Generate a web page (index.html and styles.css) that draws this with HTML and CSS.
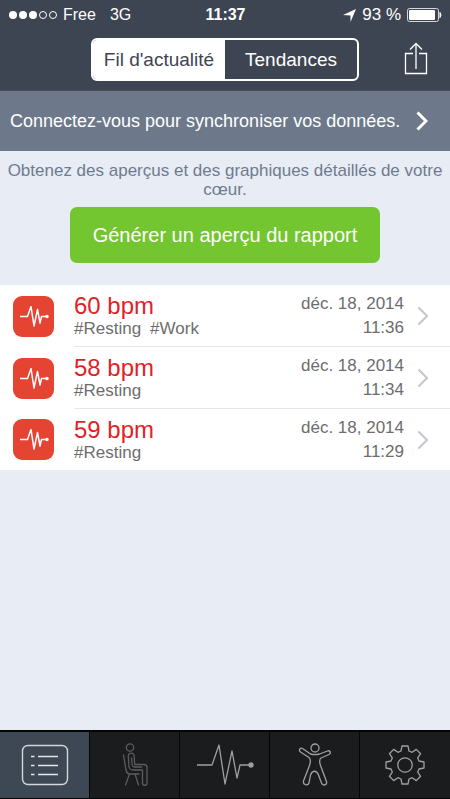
FILE: index.html
```html
<!DOCTYPE html>
<html lang="fr">
<head>
<meta charset="utf-8">
<meta name="viewport" content="width=device-width, initial-scale=1">
<title>Fil d'actualité</title>
<link rel="stylesheet" href="styles.css">
</head>
<body>
<svg class="sprite" aria-hidden="true">
  <symbol id="pulse" viewBox="0 0 60 42"><path d="M2 21h15l7-20 6 39 7-33 5 27 3-13h10" fill="none" stroke="currentColor" stroke-linejoin="round"/><circle cx="56" cy="21" r="2" fill="currentColor" stroke="currentColor"/></symbol>
  <symbol id="chevron" viewBox="0 0 12 20"><path d="M1.500 1.500 10 10l-8.500 8.500" fill="none" stroke="currentColor"/></symbol>
</svg>
<header class="top">
  <div class="status">
    <div class="carrier">
      <svg width="48" height="10" viewBox="0 0 48 10" aria-hidden="true"><g fill="#fff"><circle cx="4" cy="5" r="4"/><circle cx="14" cy="5" r="4"/><circle cx="24" cy="5" r="4"/></g><g fill="none" stroke="#fff"><circle cx="34" cy="5" r="3.500"/><circle cx="44" cy="5" r="3.500"/></g></svg>
      <span>Free</span><span class="network">3G</span>
    </div>
    <time class="clock">11:37</time>
    <div class="power">
      <svg width="13" height="13" viewBox="0 0 13 13" aria-hidden="true"><path d="M13 0 7.500 13V6.500L0 6z" fill="#fff"/></svg>
      <span>93 %</span>
      <svg width="35" height="14" viewBox="0 0 35 14" aria-hidden="true"><rect x=".5" y=".5" width="31" height="13" rx="2" fill="none" stroke="#d5d8dc"/><rect x="2" y="2" width="26" height="10" rx="1" fill="#fff"/><path d="M33 4.500q2 2.500 0 5z" fill="#fff" stroke="#fff"/></svg>
    </div>
  </div>
  <nav class="nav">
    <div class="segments">
      <button class="segment selected" type="button">Fil d'actualité</button>
      <button class="segment" type="button">Tendances</button>
    </div>
    <button class="share" type="button" aria-label="Partager"><svg width="24" height="33" viewBox="0 0 24 33"><path d="M9 11.500H1.500v20h21v-20H15M12 27V1.500M6 7.500l6-6 6 6" fill="none" stroke="#fff" stroke-width="1.300"/></svg></button>
  </nav>
</header>
<a class="banner" href="#"><span>Connectez-vous pour synchroniser vos données.</span><svg width="12" height="20"><use href="#chevron"/></svg></a>
<main>
  <section class="intro">
    <p>Obtenez des aperçus et des graphiques détaillés de votre cœur.</p>
    <button class="report" type="button">Générer un aperçu du rapport</button>
  </section>
  <ul class="list">
    <li><a class="row" href="#">
      <span class="badge"><svg width="30" height="21"><use href="#pulse"/></svg></span>
      <span class="entry"><span class="reading"><span class="bpm">60 bpm</span><span class="tags"><span>#Resting</span><span>#Work</span></span></span>
      <span class="when"><span>déc. 18, 2014</span><span>11:36</span></span>
      <svg class="more" width="12" height="20"><use href="#chevron"/></svg></span>
    </a></li>
    <li><a class="row" href="#">
      <span class="badge"><svg width="30" height="21"><use href="#pulse"/></svg></span>
      <span class="entry"><span class="reading"><span class="bpm">58 bpm</span><span class="tags"><span>#Resting</span></span></span>
      <span class="when"><span>déc. 18, 2014</span><span>11:34</span></span>
      <svg class="more" width="12" height="20"><use href="#chevron"/></svg></span>
    </a></li>
    <li><a class="row" href="#">
      <span class="badge"><svg width="30" height="21"><use href="#pulse"/></svg></span>
      <span class="entry"><span class="reading"><span class="bpm">59 bpm</span><span class="tags"><span>#Resting</span></span></span>
      <span class="when"><span>déc. 18, 2014</span><span>11:29</span></span>
      <svg class="more" width="12" height="20"><use href="#chevron"/></svg></span>
    </a></li>
  </ul>
</main>
<nav class="tabs">
  <button class="tab active" type="button" aria-label="Journal"><svg width="48" height="42" viewBox="0 0 48 42"><rect x="1.500" y="1.500" width="45" height="39" rx="5.500" fill="none" stroke="#d4d7da" stroke-width="1.400"/><path d="M10 12.500h3.500M17 12.500h20M10 21.500h3.500M17 21.500h20M10 30.500h3.500M17 30.500h20" stroke="#e4e6e8" stroke-width="1.400"/></svg></button>
  <button class="tab dim" type="button" aria-label="Repos"><svg width="26" height="44" viewBox="0 0 26 44"><g fill="none" stroke="currentColor" stroke-width="1.300" stroke-linecap="round" stroke-linejoin="round"><circle cx="8" cy="4.500" r="3.700"/><path d="M1.500 12 4 27q.8 4 4 4h9M7.500 31 3.500 42M13 31l3.500 11"/><path d="M6.300 13.500c0-4.500 5.700-4.500 5.900 0l.5 8H22q3 0 3 3V40c0 3-4.500 3-4.500 0V27H11q-3.500 0-4-3.500zM9.500 15l.7 7q.3 2 2.500 2h7"/></g></svg></button>
  <button class="tab" type="button" aria-label="Mesurer"><svg width="60" height="42" stroke-width="1.300"><use href="#pulse"/></svg></button>
  <button class="tab" type="button" aria-label="Activité"><svg width="34" height="44" viewBox="0 0 34 44"><g fill="none" stroke="currentColor" stroke-width="1.300" stroke-linejoin="round"><circle cx="17" cy="5" r="4"/><path d="M4.500 5.500C2.500 4 0 7.500 2.500 9l8.500 5.500c2 2 1.500 5 .5 8L5.500 38c-1 4 4.500 5 5.500 2l1.500-8c2-5 6-5 8 0l3 8c1.500 3.500 6 2 5-1.500l-6-16c-1-3-1.500-6 .5-7.500L31 11.500c2.500-1.500 1-4.500-1.500-3.500l-8 3c-3 .8-6 .8-9 0z"/></g></svg></button>
  <button class="tab" type="button" aria-label="Réglages"><svg width="40" height="40" viewBox="-20 -20 40 40"><g fill="none" stroke="currentColor" stroke-width="1.300" stroke-linejoin="round"><circle r="7.200"/><path d="M-4-14-3-19H3L4-14 7.100-12.700 11.300-15.600 15.600-11.300 12.700-7.100 14-4 19-3V3L14 4 12.700 7.100 15.600 11.300 11.300 15.600 7.100 12.700 4 14 3 19H-3L-4 14-7.100 12.700-11.300 15.600-15.600 11.300-12.700 7.100-14 4-19 3V-3L-14-4-12.700-7.100-15.600-11.300-11.300-15.600-7.100-12.700z"/></g></svg></button>
</nav>
</body>
</html>
```
FILE: styles.css
```css
* { box-sizing: border-box; }
body {
  margin: 0;
  min-height: 100vh;
  display: flex;
  flex-direction: column;
  background: #e8ecf4;
  font: 17px/24px "Liberation Sans", Arial, sans-serif;
  color: #6d6d6d;
}
button { font: inherit; color: inherit; border: 0; padding: 0; background: none; }
a { color: inherit; text-decoration: none; }
svg { display: block; flex: none; }
.sprite { position: absolute; width: 0; height: 0; }

.top { background: #3e4552; color: #fff; border-bottom: 1px solid #4a4a5c; }
.status {
  display: grid;
  grid-template-columns: 1fr auto 1fr;
  align-items: center;
  height: 30px;
  padding: 0 8px 0 9px;
  font-size: 16px;
}
.carrier, .power { display: flex; align-items: center; gap: 6px; }
.power { justify-content: flex-end; font-size: 17px; }
.network { margin-left: 8px; }
.clock { font-weight: bold; }
.nav {
  display: grid;
  grid-template-columns: 1fr 268px 1fr;
  align-items: start;
  height: 60px;
  padding-top: 8px;
}
.segments {
  grid-column: 2;
  display: flex;
  height: 43px;
  border: 2px solid #fff;
  border-radius: 6px;
  overflow: hidden;
  font-size: 19px;
}
.segment { flex: 1; }
.segment.selected { background: #fff; color: #3e4552; }
.share {
  display: grid;
  place-items: center;
  height: 40px;
  justify-self: end;
  margin-right: 22px;
}

.banner {
  display: flex;
  align-items: center;
  gap: 16px;
  height: 60px;
  padding: 0 10px;
  background: #6d798b;
  color: #fff;
  font-size: 18px;
  white-space: nowrap;
}
.banner svg { stroke-width: 3; }

main { flex: 1; }
.intro { padding: 10px 4px 22px; text-align: center; }
.intro p { margin: 0 0 8px; line-height: 19px; color: #6f7b90; }
.report {
  width: 310px;
  height: 56px;
  border-radius: 7px;
  background: #73c62f;
  color: #fff;
  font-size: 20px;
}

.list { margin: 0; padding: 0; list-style: none; background: #fff; }
.row { display: flex; align-items: center; padding-left: 13px; }
.badge {
  display: grid;
  place-items: center;
  width: 41px;
  height: 41px;
  margin-right: 20px;
  border-radius: 9px;
  background: #e64432;
  color: #fff;
}
.badge svg { stroke-width: 3; }
.entry {
  flex: 1;
  display: flex;
  align-items: center;
  height: 62px;
  padding-right: 21px;
  border-bottom: 1px solid #e6e7e9;
}
li:last-child .entry { height: 61px; border-bottom: 0; }
.reading { flex: 1; display: flex; flex-direction: column; }
.bpm { font-size: 24px; line-height: 26px; color: #e21f26; }
.tags { display: flex; gap: 9px; line-height: 20px; }
.when { display: flex; flex-direction: column; text-align: right; }
.more { margin-left: 13px; color: #c5c5cb; stroke-width: 2; }

.tabs {
  display: grid;
  grid-template-columns: repeat(5, 1fr);
  height: 69px;
  padding: 2px 0 1px;
  background: #050506;
}
.tab { display: grid; place-items: center; background: #1b1c1e; color: #a0a0a0; }
.tab:not(:last-child) { border-right: 1px solid #050506; }
.tab.active { background: #3e4855; }
.tab.dim { color: #5c5c5c; }
```
